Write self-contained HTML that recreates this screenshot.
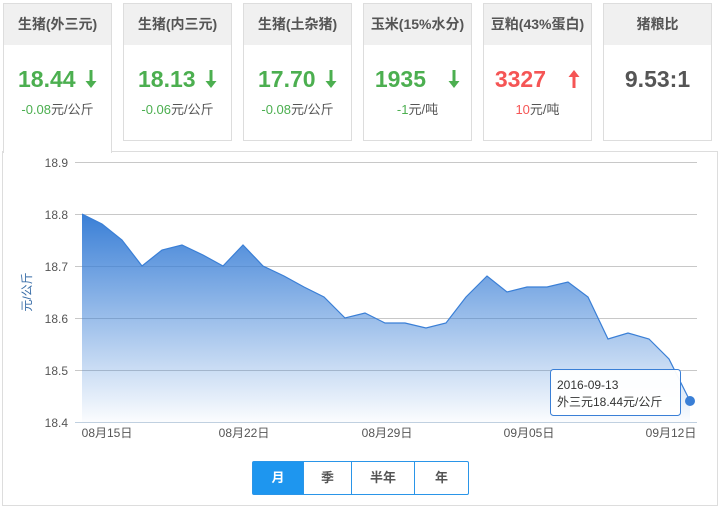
<!DOCTYPE html>
<html><head><meta charset="utf-8"><style>
body{margin:0;width:720px;height:507px;background:#fff;font-family:"Liberation Sans","Noto Sans CJK SC",sans-serif;position:relative;overflow:hidden}
.card{position:absolute;top:3px;width:107px;height:136px;border:1px solid #ddd;background:#fff;text-align:center}
.card .h{height:41px;background:#f0f0f0;line-height:41px;font-size:14px;font-weight:bold;color:#555}
.card .v{margin-top:20px;font-size:23px;font-weight:bold;line-height:28px}
.card .s{margin-top:6px;font-size:13px;color:#555}
.g{color:#4caf50}.r{color:#f55555}
.a{display:inline-block;width:12px;height:18px;vertical-align:-1px;margin-left:3px}
.panel{position:absolute;left:2px;top:151px;width:714px;height:353px;border:1px solid #ddd}
.btns{position:absolute;left:252px;top:461px;height:32px;display:flex;border:1px solid #2a95e8;border-radius:2px;font-size:13px;font-weight:bold;color:#555}
.btns div{line-height:32px;text-align:center;border-left:1px solid #2a95e8}
</style></head><body>
<div class="panel"></div>
<div class="card" style="left:3px;height:149px;border-bottom:none"><div class="h">生猪(外三元)</div><div class="v g">18.44 <svg class="a" viewBox="0 0 12 18"><path d="M4.5 0h3v11h4L6 18 0.5 11h4z" fill="#4caf50"/></svg></div><div class="s"><span class="g">-0.08</span>元/公斤</div></div>
<div class="card" style="left:123px"><div class="h">生猪(内三元)</div><div class="v g">18.13 <svg class="a" viewBox="0 0 12 18"><path d="M4.5 0h3v11h4L6 18 0.5 11h4z" fill="#4caf50"/></svg></div><div class="s"><span class="g">-0.06</span>元/公斤</div></div>
<div class="card" style="left:243px"><div class="h">生猪(土杂猪)</div><div class="v g">17.70 <svg class="a" viewBox="0 0 12 18"><path d="M4.5 0h3v11h4L6 18 0.5 11h4z" fill="#4caf50"/></svg></div><div class="s"><span class="g">-0.08</span>元/公斤</div></div>
<div class="card" style="left:363px"><div class="h">玉米(15%水分)</div><div class="v g">1935&nbsp;&nbsp; <svg class="a" viewBox="0 0 12 18"><path d="M4.5 0h3v11h4L6 18 0.5 11h4z" fill="#4caf50"/></svg></div><div class="s"><span class="g">-1</span>元/吨</div></div>
<div class="card" style="left:483px"><div class="h">豆粕(43%蛋白)</div><div class="v r">3327&nbsp;&nbsp; <svg class="a" viewBox="0 0 12 18"><path d="M4.5 18h3V7h4L6 0 0.5 7h4z" fill="#f55555"/></svg></div><div class="s"><span class="r">10</span>元/吨</div></div>
<div class="card" style="left:603px"><div class="h">猪粮比</div><div class="v" style="color:#555">9.53:1</div></div>
<svg style="position:absolute;left:0;top:0" width="720" height="507">
<defs><linearGradient id="gr" x1="0" y1="0" x2="0" y2="1"><stop offset="0" stop-color="#3a7fd6"/><stop offset="1" stop-color="#3a7fd6" stop-opacity="0.02"/></linearGradient></defs>
<g stroke="#c8c8c8" stroke-width="1">
<line x1="75" y1="162.5" x2="697" y2="162.5"/><line x1="75" y1="214.5" x2="697" y2="214.5"/><line x1="75" y1="266.5" x2="697" y2="266.5"/><line x1="75" y1="318.5" x2="697" y2="318.5"/><line x1="75" y1="370.5" x2="697" y2="370.5"/><line x1="75" y1="422.5" x2="697" y2="422.5" stroke="#c0d0e0"/>
</g>
<path d="M82 214 L102 224 L122 240 L142 266 L162 250 L182 245 L203 255 L223 266 L243 245 L263 266 L284 276 L304 287 L324 297 L345 318 L365 313 L385 323 L405 323 L426 328 L446 323 L466 297 L487 276 L507 292 L527 287 L547 287 L568 282 L588 297 L608 339 L628 333 L649 339 L669 359 L690 401 L690 422 L82 422Z" fill="url(#gr)"/>
<path d="M82 214 L102 224 L122 240 L142 266 L162 250 L182 245 L203 255 L223 266 L243 245 L263 266 L284 276 L304 287 L324 297 L345 318 L365 313 L385 323 L405 323 L426 328 L446 323 L466 297 L487 276 L507 292 L527 287 L547 287 L568 282 L588 297 L608 339 L628 333 L649 339 L669 359 L690 401" fill="none" stroke="#3a7fd6" stroke-width="1.2"/>
<circle cx="690" cy="401" r="5" fill="#3a7fd6"/>
<g font-size="12" fill="#555" text-anchor="end"><text x="68" y="167">18.9</text><text x="68" y="219">18.8</text><text x="68" y="271">18.7</text><text x="68" y="323">18.6</text><text x="68" y="375">18.5</text><text x="68" y="427">18.4</text></g>
<text transform="translate(31,292) rotate(-90)" font-size="12" fill="#3a6ea8" text-anchor="middle">元/公斤</text>
<g font-size="12" fill="#555" text-anchor="middle"><text x="107" y="437">08月15日</text><text x="244" y="437">08月22日</text><text x="387" y="437">08月29日</text><text x="529" y="437">09月05日</text><text x="671" y="437">09月12日</text></g>
<rect x="550.5" y="369.5" width="130" height="46" rx="3" fill="#fff" fill-opacity="0.95" stroke="#3a7fd6"/>
<text x="557" y="389" font-size="12" fill="#333">2016-09-13</text>
<text x="557" y="406" font-size="12" fill="#333">外三元18.44元/公斤</text>
</svg>
<div class="btns"><div style="width:50px;border:none;background:#1e96ef;color:#fff">月</div><div style="width:47px">季</div><div style="width:62px">半年</div><div style="width:53px">年</div></div>
</body></html>
